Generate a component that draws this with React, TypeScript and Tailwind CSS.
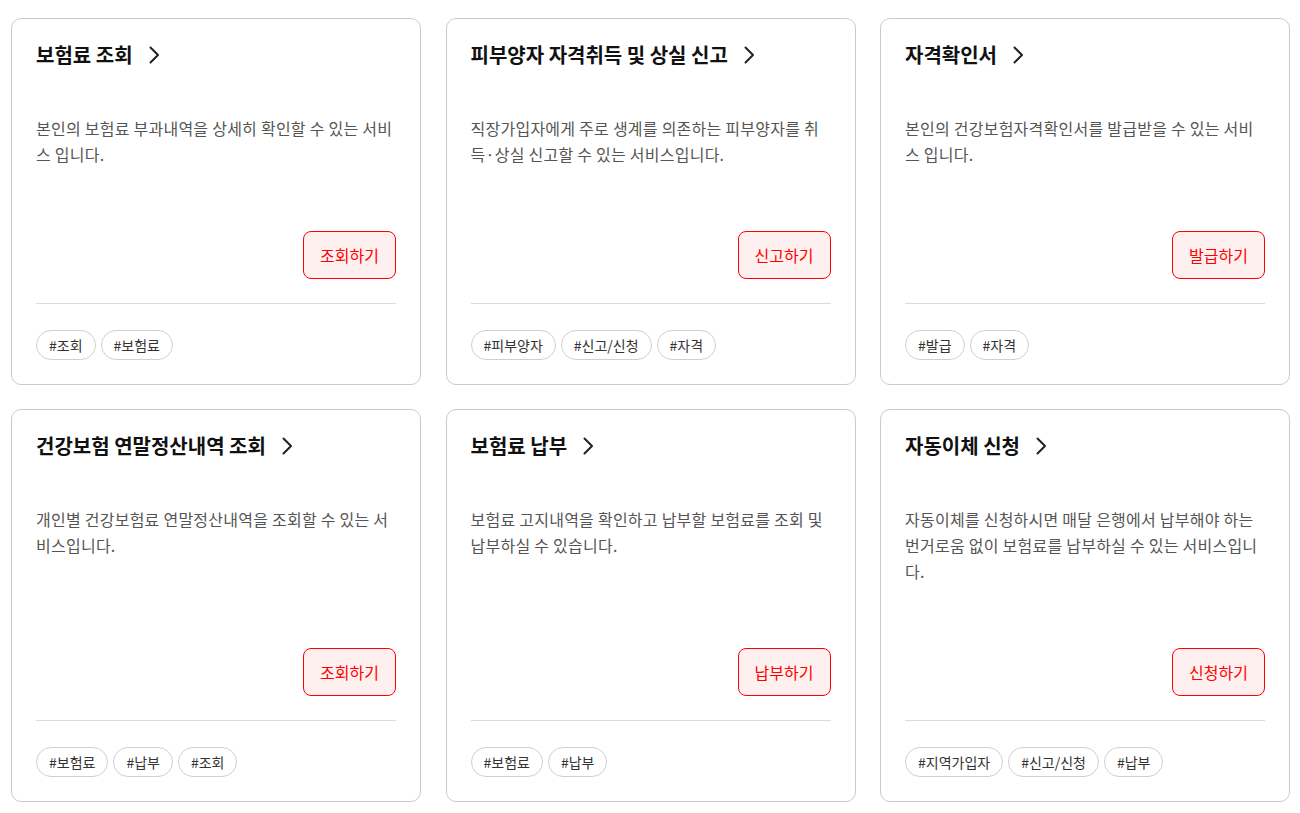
type Service = {
  title: string;
  desc: string;
  action: string;
  tags: string[];
};

const services: Service[] = [
  {
    title: '보험료 조회',
    desc: '본인의 보험료 부과내역을 상세히 확인할 수 있는 서비스 입니다.',
    action: '조회하기',
    tags: ['#조회', '#보험료'],
  },
  {
    title: '피부양자 자격취득 및 상실 신고',
    desc: '직장가입자에게 주로 생계를 의존하는 피부양자를 취득·상실 신고할 수 있는 서비스입니다.',
    action: '신고하기',
    tags: ['#피부양자', '#신고/신청', '#자격'],
  },
  {
    title: '자격확인서',
    desc: '본인의 건강보험자격확인서를 발급받을 수 있는 서비스 입니다.',
    action: '발급하기',
    tags: ['#발급', '#자격'],
  },
  {
    title: '건강보험 연말정산내역 조회',
    desc: '개인별 건강보험료 연말정산내역을 조회할 수 있는 서비스입니다.',
    action: '조회하기',
    tags: ['#보험료', '#납부', '#조회'],
  },
  {
    title: '보험료 납부',
    desc: '보험료 고지내역을 확인하고 납부할 보험료를 조회 및 납부하실 수 있습니다.',
    action: '납부하기',
    tags: ['#보험료', '#납부'],
  },
  {
    title: '자동이체 신청',
    desc: '자동이체를 신청하시면 매달 은행에서 납부해야 하는 번거로움 없이 보험료를 납부하실 수 있는 서비스입니다.',
    action: '신청하기',
    tags: ['#지역가입자', '#신고/신청', '#납부'],
  },
];

function Chevron() {
  return (
    <svg width="12" height="20" viewBox="0 0 12 20" fill="none" className="shrink-0">
      <path d="M2.5 2.5 10 10l-7.5 7.5" stroke="#222" strokeWidth="2" strokeLinecap="round" strokeLinejoin="round" />
    </svg>
  );
}

function ServiceCard({ item }: { item: Service }) {
  return (
    <div className="flex flex-col rounded-[10px] border border-[#cbcbcb] bg-white p-6">
      <a href="#" className="flex items-center gap-[15px] text-[20px] font-bold leading-6 text-[#111]">
        <span>{item.title}</span>
        <Chevron />
      </a>
      <p className="mt-[48px] flex-1 break-all text-[16px] leading-[26px] tracking-[0.25px] text-[#555]">{item.desc}</p>
      <div className="mt-16 flex justify-end">
        <button className="h-12 rounded-lg border border-[#ff0000] bg-[#fff0f0] px-4 text-[16px] text-[#ff0000]">
          {item.action}
        </button>
      </div>
      <div className="mt-6 h-px bg-[#dcdcdc]" />
      <div className="mt-[26px] flex flex-wrap gap-[5px]">
        {item.tags.map((tag) => (
          <span
            key={tag}
            className="flex h-[30px] items-center rounded-full border border-[#cfcfcf] px-3 text-sm text-[#333]"
          >
            {tag}
          </span>
        ))}
      </div>
    </div>
  );
}

export default function App() {
  return (
    <div
      className="min-h-[813px] bg-white pt-[18px] pr-[10px] pl-[11px]"
      style={{ fontFamily: '"Noto Sans CJK KR", "Noto Sans", sans-serif' }}
    >
      <div className="grid grid-cols-3 gap-x-[24.5px] gap-y-[24px]">
        {services.map((s) => (
          <ServiceCard key={s.title} item={s} />
        ))}
      </div>
    </div>
  );
}
